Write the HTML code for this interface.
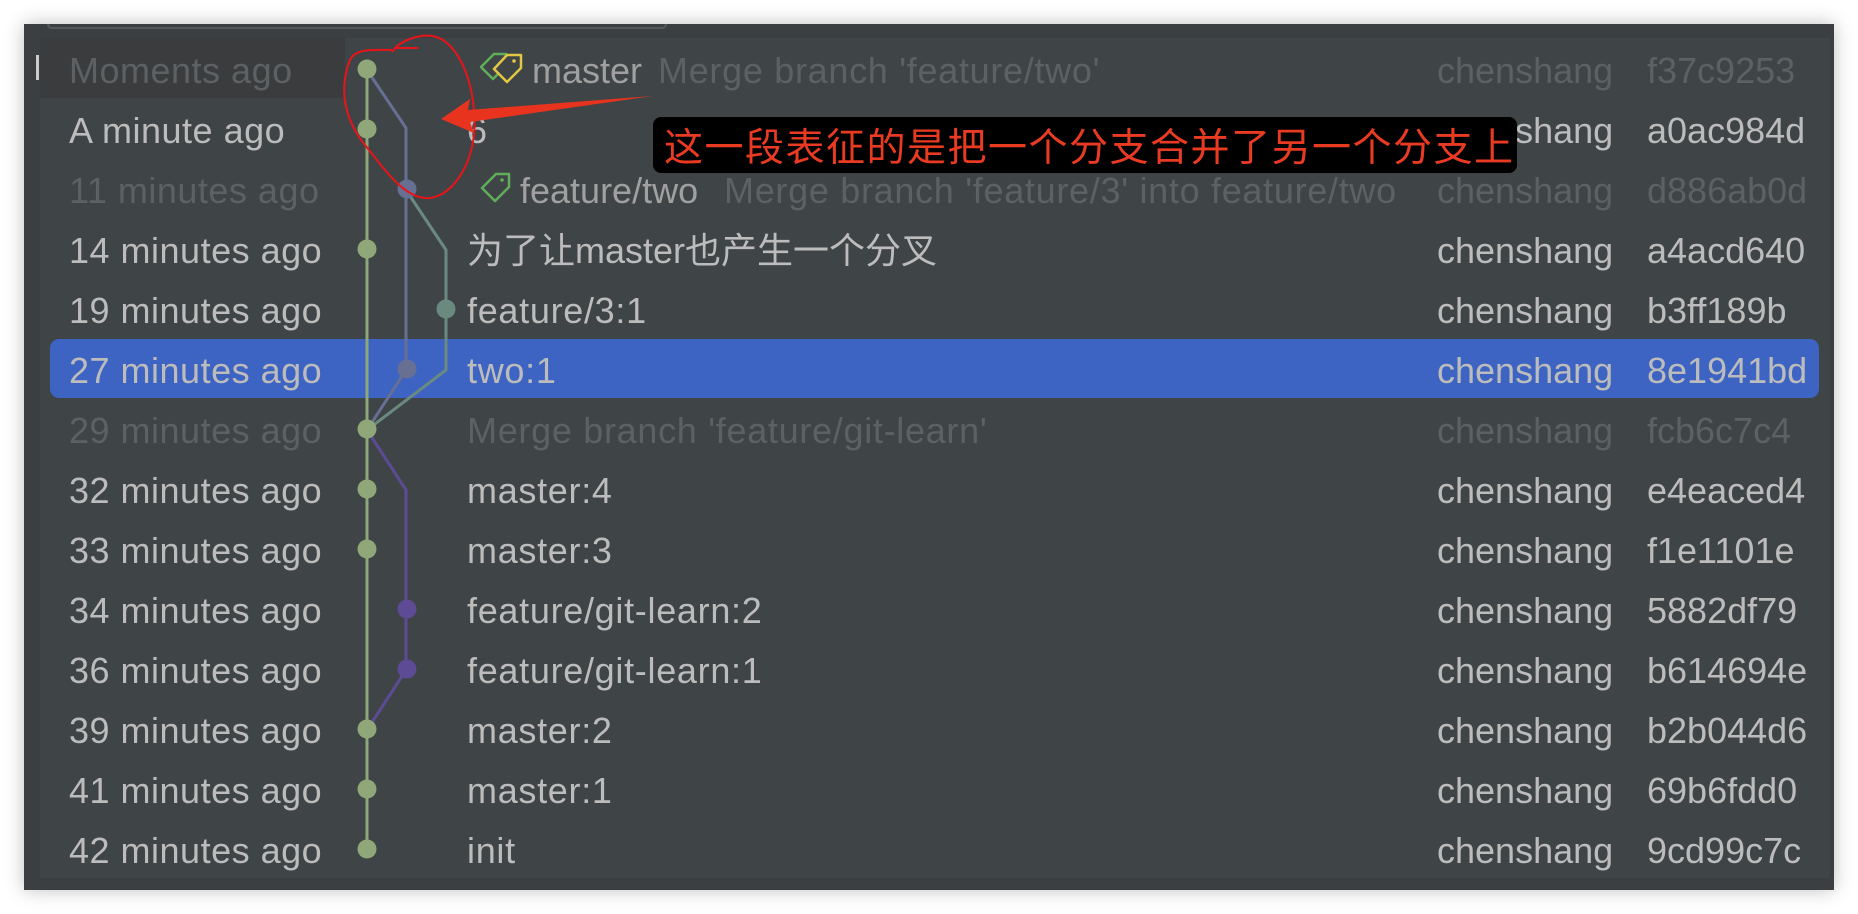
<!DOCTYPE html>
<html><head><meta charset="utf-8"><style>
*{margin:0;padding:0;box-sizing:border-box}
body{width:1858px;height:914px;background:#fff;position:relative;overflow:hidden;font-family:"Liberation Sans","Noto Sans CJK SC",sans-serif}
#win{position:absolute;left:24px;top:24px;width:1810px;height:866px;background:#3c3f41;box-shadow:0 0 18px rgba(0,0,0,.25)}
#content{position:absolute;left:40px;top:38px;width:1790px;height:840px;background:#3f4446;overflow:hidden}
.row{position:absolute;left:0;width:1790px;height:60px;font-size:36px;color:#bcbcbc;white-space:nowrap}
.row span{position:absolute;top:13px;line-height:40px}
.d{left:29px;letter-spacing:.5px}
.m{left:427px;letter-spacing:.7px}
.ms{letter-spacing:.7px}
.a{left:1397px}
.h{left:1607px;width:164px;overflow:hidden}
.dim{color:#5d6164}
.lab{color:#a0a0a0}
</style></head><body>
<div id="win">
<div style="position:absolute;left:23px;top:0;width:620px;height:5px;border:2px solid #55585a;border-top:none;border-radius:0 0 6px 6px"></div>
<div style="position:absolute;left:12px;top:31px;width:3px;height:25px;background:#ccc"></div>
</div>
<div id="content">
<div style="position:absolute;left:0;top:0;width:305px;height:60px;background:#3a3c3e"></div>
<div style="position:absolute;left:10px;top:301px;width:1769px;height:59px;background:#3d63c3;border-radius:9px"></div>

<div class="row" style="top:0"><span class="d dim">Moments ago</span><span class="lab" style="left:492px">master</span><span class="dim ms" style="left:618px">Merge branch 'feature/two'</span><span class="a dim">chenshang</span><span class="h dim">f37c9253</span></div>
<div class="row" style="top:60px"><span class="d">A minute ago</span><span class="m">6</span><span class="a">chenshang</span><span class="h">a0ac984d</span></div>
<div class="row" style="top:120px"><span class="d dim">11 minutes ago</span><span class="lab" style="left:480px">feature/two</span><span class="dim ms" style="left:684px">Merge branch 'feature/3' into feature/two</span><span class="a dim">chenshang</span><span class="h dim">d886ab0d</span></div>
<div class="row" style="top:180px"><span class="d">14 minutes ago</span><span class="m" style="letter-spacing:0">为了让master也产生一个分叉</span><span class="a">chenshang</span><span class="h">a4acd640</span></div>
<div class="row" style="top:240px"><span class="d">19 minutes ago</span><span class="m">feature/3:1</span><span class="a">chenshang</span><span class="h">b3ff189b</span></div>
<div class="row" style="top:300px"><span class="d">27 minutes ago</span><span class="m">two:1</span><span class="a">chenshang</span><span class="h">8e1941bd</span></div>
<div class="row" style="top:360px"><span class="d dim">29 minutes ago</span><span class="m dim">Merge branch 'feature/git-learn'</span><span class="a dim">chenshang</span><span class="h dim">fcb6c7c4</span></div>
<div class="row" style="top:420px"><span class="d">32 minutes ago</span><span class="m">master:4</span><span class="a">chenshang</span><span class="h">e4eaced4</span></div>
<div class="row" style="top:480px"><span class="d">33 minutes ago</span><span class="m">master:3</span><span class="a">chenshang</span><span class="h">f1e1101e</span></div>
<div class="row" style="top:540px"><span class="d">34 minutes ago</span><span class="m">feature/git-learn:2</span><span class="a">chenshang</span><span class="h">5882df79</span></div>
<div class="row" style="top:600px"><span class="d">36 minutes ago</span><span class="m">feature/git-learn:1</span><span class="a">chenshang</span><span class="h">b614694e</span></div>
<div class="row" style="top:660px"><span class="d">39 minutes ago</span><span class="m">master:2</span><span class="a">chenshang</span><span class="h">b2b044d6</span></div>
<div class="row" style="top:720px"><span class="d">41 minutes ago</span><span class="m">master:1</span><span class="a">chenshang</span><span class="h">69b6fdd0</span></div>
<div class="row" style="top:780px"><span class="d">42 minutes ago</span><span class="m">init</span><span class="a">chenshang</span><span class="h">9cd99c7c</span></div>
</div>

<svg width="1858" height="914" style="position:absolute;left:0;top:0" fill="none" stroke-width="3">
<line x1="367" y1="70" x2="367" y2="850" stroke="#8fa779"/>
<polyline points="367,70 406,128 406,370 367,430" stroke="#676f93"/>
<polyline points="406,190 446,250 446,370 367,430" stroke="#6a8a80"/>
<polyline points="367,430 406,490 406,670 367,730" stroke="#5d4b96"/>
<g fill="#8fa779" stroke="none">
<circle cx="367" cy="69" r="9.5"/><circle cx="367" cy="129" r="9.5"/><circle cx="367" cy="249" r="9.5"/><circle cx="367" cy="429" r="9.5"/><circle cx="367" cy="489" r="9.5"/><circle cx="367" cy="549" r="9.5"/><circle cx="367" cy="729" r="9.5"/><circle cx="367" cy="789" r="9.5"/><circle cx="367" cy="849" r="9.5"/>
</g>
<circle cx="407" cy="189" r="9.5" fill="#676f93" stroke="none"/>
<circle cx="407" cy="369" r="9.5" fill="#676f93" stroke="none"/>
<circle cx="446" cy="309" r="9.5" fill="#6a8a80" stroke="none"/>
<circle cx="407" cy="609" r="9.5" fill="#5d4b96" stroke="none"/>
<circle cx="407" cy="669" r="9.5" fill="#5d4b96" stroke="none"/>
<g stroke-width="2.5" stroke-linejoin="round">
<path d="M481 67 L494 54 H506 V66 L493 79 Z" stroke="#5fae5a"/>
<path d="M494 69 L507 55 H521 V68 L507 82 Z" stroke="#e1c742" fill="#3f4446"/>
<circle cx="514" cy="61" r="1.8" fill="#e1c742" stroke="none"/>
<path d="M482 188 L496 174 H509 V187 L495 201 Z" stroke="#5fae5a"/>
<circle cx="502" cy="180" r="1.8" fill="#5fae5a" stroke="none"/>
</g>
<path d="M396 48 L418 48 M392 52 C400 40 420 34 432 36 C460 40 478 90 474 135 C470 170 450 196 430 198 C405 200 385 170 365 145 C345 120 338 90 350 60 C356 48 372 50 392 50" stroke="#e8141a" stroke-width="2"/>
<path d="M653 96 L468 110 L470 99 L441 119 L474 133 L470 122 Z" fill="#e8341f" stroke="none"/>
</svg>
<div style="position:absolute;left:653px;top:117px;width:864px;height:56px;background:#000;border-radius:8px"></div>
<div style="position:absolute;left:664px;top:122px;font-size:39px;line-height:46px;color:#ea3b22;letter-spacing:1.5px;white-space:nowrap;font-family:'Noto Sans CJK SC',sans-serif">这一段表征的是把一个分支合并了另一个分支上</div>
</body></html>
